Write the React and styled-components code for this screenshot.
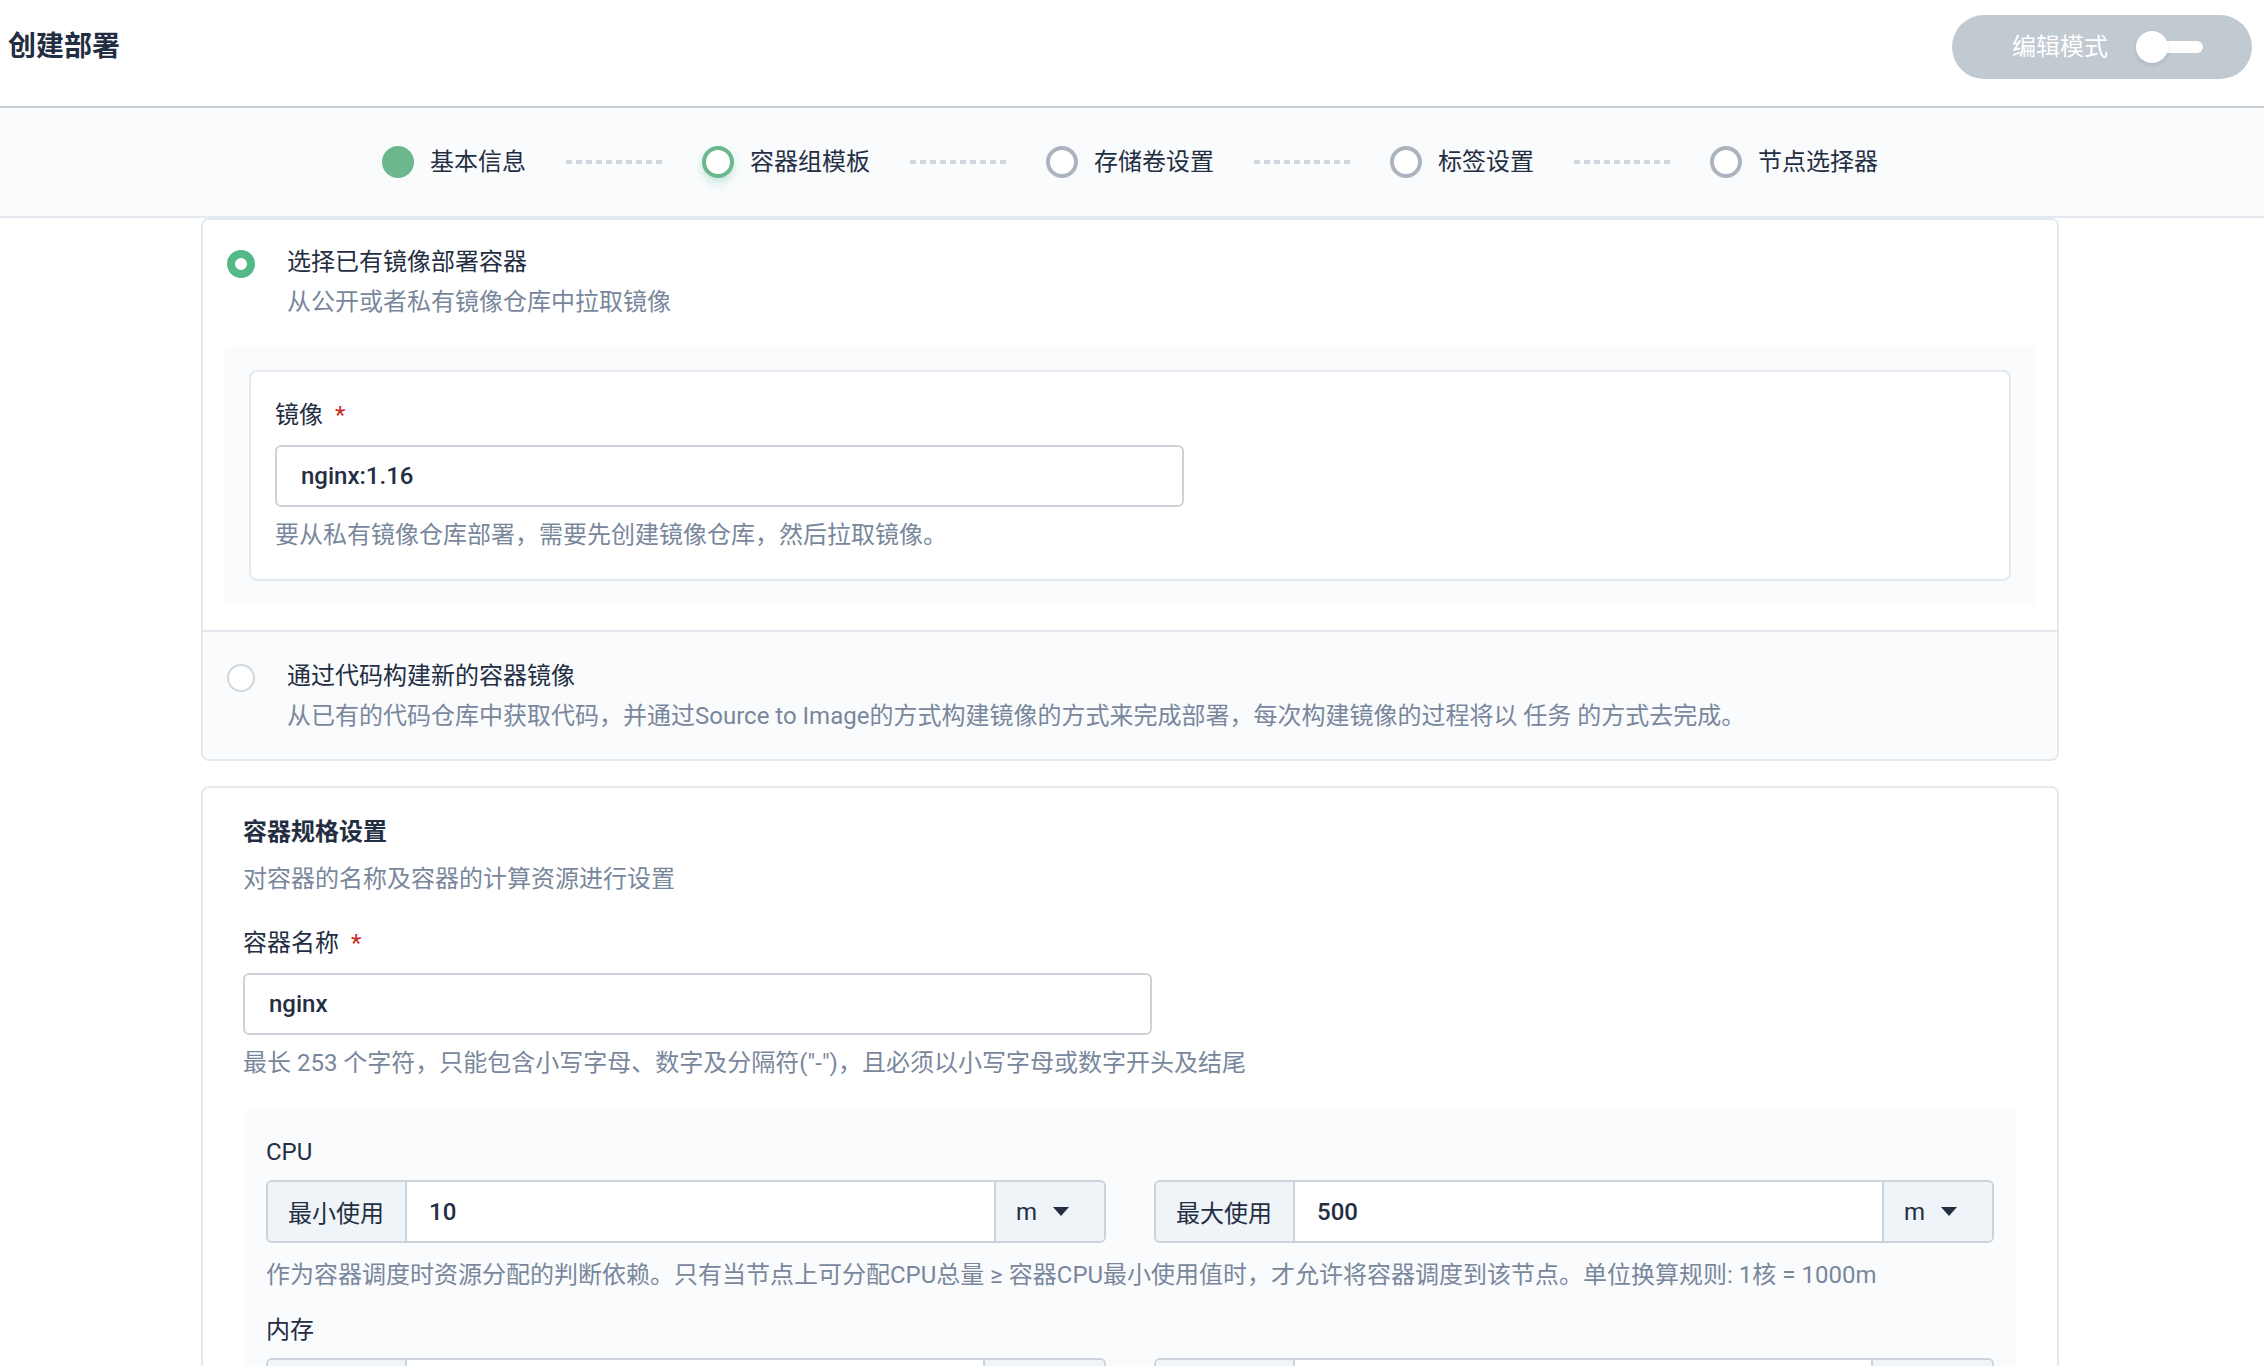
import React from 'react';
import styled, { createGlobalStyle } from 'styled-components';

const GlobalStyle = createGlobalStyle`
  html, body { margin: 0; padding: 0; background: #fff; }
  body {
    font-family: Roboto, "Noto Sans CJK SC", sans-serif;
    color: #242e42;
    overflow: hidden;
  }
  * { box-sizing: border-box; }
`;

const Header = styled.header`
  height: 108px;
  display: flex;
  align-items: center;
  justify-content: space-between;
  padding: 0 12px 12px 8px;
  border-bottom: 2px solid #c8d0d8;
`;

const Title = styled.h1`
  margin: 0;
  font-size: 28px;
  line-height: 40px;
  font-weight: 700;
  color: #242e42;
`;

const ModeToggle = styled.div`
  width: 300px;
  height: 64px;
  border-radius: 32px;
  background: #c1c9d1;
  display: flex;
  align-items: center;
  gap: 28px;
  padding: 0 48px 0 60px;
  color: #fff;
  font-size: 24px;
  line-height: 32px;
  white-space: nowrap;
`;

const Switch = styled.span`
  position: relative;
  flex: none;
  width: 67px;
  height: 32px;
  display: flex;
  align-items: center;
  justify-content: flex-end;

  &::before {
    content: '';
    width: 51px;
    height: 12px;
    border-radius: 6px;
    background: #fff;
  }
`;

const Knob = styled.span`
  position: absolute;
  left: 0;
  top: 0;
  width: 32px;
  height: 32px;
  border-radius: 50%;
  background: #fff;
  box-shadow: 0 2px 4px rgba(36, 46, 66, 0.12);
`;

const StepBar = styled.nav`
  height: 110px;
  background: #f9fbfd;
  border-bottom: 2px solid #e3e9ef;
  display: flex;
  align-items: center;
  justify-content: center;
  gap: 40px;
  padding-right: 4px;
`;

const Step = styled.div`
  display: flex;
  align-items: center;
  gap: 16px;
  font-size: 24px;
  line-height: 32px;
  color: #242e42;
`;

const StepDot = styled.span`
  width: 32px;
  height: 32px;
  border-radius: 50%;
  flex: none;
  background: ${p => (p.$state === 'done' ? '#6cb78e' : '#fff')};
  border: ${p =>
    p.$state === 'done' ? 'none' : p.$state === 'current' ? '4px solid #6cb78e' : '4px solid #abb4be'};
  box-shadow: ${p => (p.$state === 'current' ? '0 5px 9px rgba(85, 188, 138, 0.3)' : 'none')};
`;

const Dashes = styled.span`
  width: 96px;
  height: 4px;
  background: repeating-linear-gradient(90deg, #d1d7df 0 6px, transparent 6px 10px);
`;

const Main = styled.main`
  padding-right: 4px;
`;

const Card = styled.section`
  width: 1858px;
  margin: ${p => p.$gap || 0}px auto 0;
  border: 2px solid #e3e9ef;
  border-radius: 8px;
  background: #fff;
  overflow: hidden;
`;

const Option = styled.div`
  padding: ${p => (p.$active ? '22px 22px 25px' : '24px 22px 23px')};
  background: ${p => (p.$active ? '#fff' : '#f9fbfd')};
  border-top: ${p => (p.$divided ? '2px solid #e3e9ef' : 'none')};
`;

const OptionHead = styled.div`
  display: flex;
  align-items: flex-start;
  gap: 32px;
  padding-left: 2px;
`;

const Radio = styled.span`
  flex: none;
  width: 28px;
  height: 28px;
  margin-top: 8px;
  border-radius: 50%;
  background: #fff;
  border: ${p => (p.$checked ? '8px solid #55b887' : '2px solid #d1d7df')};
`;

const OptionTitle = styled.div`
  font-size: 24px;
  line-height: 40px;
  color: #242e42;
`;

const Muted = styled.div`
  font-size: 24px;
  line-height: ${p => p.$lh || 40}px;
  color: #79879c;
  margin-top: ${p => p.$mt || 0}px;
`;

const GrayBox = styled.div`
  margin-top: 24px;
  padding: 24px;
  background: #f9fbfd;
`;

const InnerCard = styled.div`
  background: #fff;
  border: 2px solid #e3e9ef;
  border-radius: 8px;
  padding: 25px 24px 26px;
`;

const Label = styled.div`
  font-size: 24px;
  line-height: 36px;
  color: #242e42;
  margin-top: ${p => p.$mt || 0}px;

  b {
    font-weight: 400;
    color: #ca2621;
    margin-left: 12px;
  }
`;

const TextInput = styled.div`
  margin-top: 12px;
  width: 909px;
  height: 62px;
  border: 2px solid #ccd3db;
  border-radius: 6px;
  padding: 0 24px;
  display: flex;
  align-items: center;
  font-size: 24px;
  font-weight: 500;
  color: #242e42;
`;

const SpecBody = styled.div`
  padding: 24px 40px 40px;
`;

const SectionTitle = styled.div`
  font-size: 24px;
  line-height: 40px;
  font-weight: 700;
`;

const ResourceBox = styled.div`
  margin-top: 27px;
  background: #f9fbfd;
  border-radius: 8px;
  padding: 26px 23px 30px;
`;

const GroupRow = styled.div`
  margin-top: 10px;
  display: grid;
  grid-template-columns: 1fr 1fr;
  gap: 48px;
`;

const InputGroup = styled.div`
  height: 63px;
  border: 2px solid #ccd3db;
  border-radius: 6px;
  display: flex;
  overflow: hidden;
  font-size: 24px;
  color: #242e42;
`;

const Addon = styled.span`
  flex: none;
  width: ${p => p.$w}px;
  background: #eff4f9;
  display: flex;
  align-items: center;
  gap: 16px;
  padding: 0 20px;
  border-left: ${p => (p.$right ? '2px solid #ccd3db' : 'none')};
  border-right: ${p => (p.$right ? 'none' : '2px solid #ccd3db')};
`;

const Value = styled.span`
  flex: 1;
  background: #fff;
  display: flex;
  align-items: center;
  padding: 0 22px;
  font-weight: 500;
`;

const Caret = styled.span`
  width: 0;
  height: 0;
  border-left: 8px solid transparent;
  border-right: 8px solid transparent;
  border-top: 9px solid #242e42;
`;

const steps = [
  { text: '基本信息', state: 'done' },
  { text: '容器组模板', state: 'current' },
  { text: '存储卷设置', state: 'todo' },
  { text: '标签设置', state: 'todo' },
  { text: '节点选择器', state: 'todo' },
];

const ResourceInput = ({ prefix, value, unit, unitWidth }) => (
  <InputGroup>
    <Addon $w={139}>{prefix}</Addon>
    <Value>{value}</Value>
    <Addon $w={unitWidth} $right>
      {unit}
      <Caret />
    </Addon>
  </InputGroup>
);

const App = () => (
  <>
    <GlobalStyle />
    <Header>
      <Title>创建部署</Title>
      <ModeToggle>
        编辑模式
        <Switch>
          <Knob />
        </Switch>
      </ModeToggle>
    </Header>

    <StepBar>
      {steps.map((s, i) => (
        <React.Fragment key={s.text}>
          {i > 0 && <Dashes />}
          <Step>
            <StepDot $state={s.state} />
            {s.text}
          </Step>
        </React.Fragment>
      ))}
    </StepBar>

    <Main>
      <Card>
        <Option $active>
          <OptionHead>
            <Radio $checked />
            <div>
              <OptionTitle>选择已有镜像部署容器</OptionTitle>
              <Muted>从公开或者私有镜像仓库中拉取镜像</Muted>
            </div>
          </OptionHead>
          <GrayBox>
            <InnerCard>
              <Label>
                镜像<b>*</b>
              </Label>
              <TextInput>nginx:1.16</TextInput>
              <Muted $lh={36} $mt={10}>
                要从私有镜像仓库部署，需要先创建镜像仓库，然后拉取镜像。
              </Muted>
            </InnerCard>
          </GrayBox>
        </Option>
        <Option $divided>
          <OptionHead>
            <Radio />
            <div>
              <OptionTitle>通过代码构建新的容器镜像</OptionTitle>
              <Muted>
                从已有的代码仓库中获取代码，并通过Source to Image的方式构建镜像的方式来完成部署，每次构建镜像的过程将以 任务 的方式去完成。
              </Muted>
            </div>
          </OptionHead>
        </Option>
      </Card>

      <Card $gap={25}>
        <SpecBody>
          <SectionTitle>容器规格设置</SectionTitle>
          <Muted $mt={7}>对容器的名称及容器的计算资源进行设置</Muted>
          <Label $mt={26}>
            容器名称<b>*</b>
          </Label>
          <TextInput>nginx</TextInput>
          <Muted $lh={36} $mt={10}>
            最长 253 个字符，只能包含小写字母、数字及分隔符("-")，且必须以小写字母或数字开头及结尾
          </Muted>
          <ResourceBox>
            <Label>CPU</Label>
            <GroupRow>
              <ResourceInput prefix="最小使用" value="10" unit="m" unitWidth={110} />
              <ResourceInput prefix="最大使用" value="500" unit="m" unitWidth={110} />
            </GroupRow>
            <Muted $lh={36} $mt={14}>
              作为容器调度时资源分配的判断依赖。只有当节点上可分配CPU总量 ≥ 容器CPU最小使用值时，才允许将容器调度到该节点。单位换算规则: 1核 = 1000m
            </Muted>
            <Label $mt={19}>内存</Label>
            <GroupRow>
              <ResourceInput prefix="最小使用" value="" unit="Mi" unitWidth={121} />
              <ResourceInput prefix="最大使用" value="" unit="Mi" unitWidth={121} />
            </GroupRow>
          </ResourceBox>
        </SpecBody>
      </Card>
    </Main>
  </>
);

export default App;
